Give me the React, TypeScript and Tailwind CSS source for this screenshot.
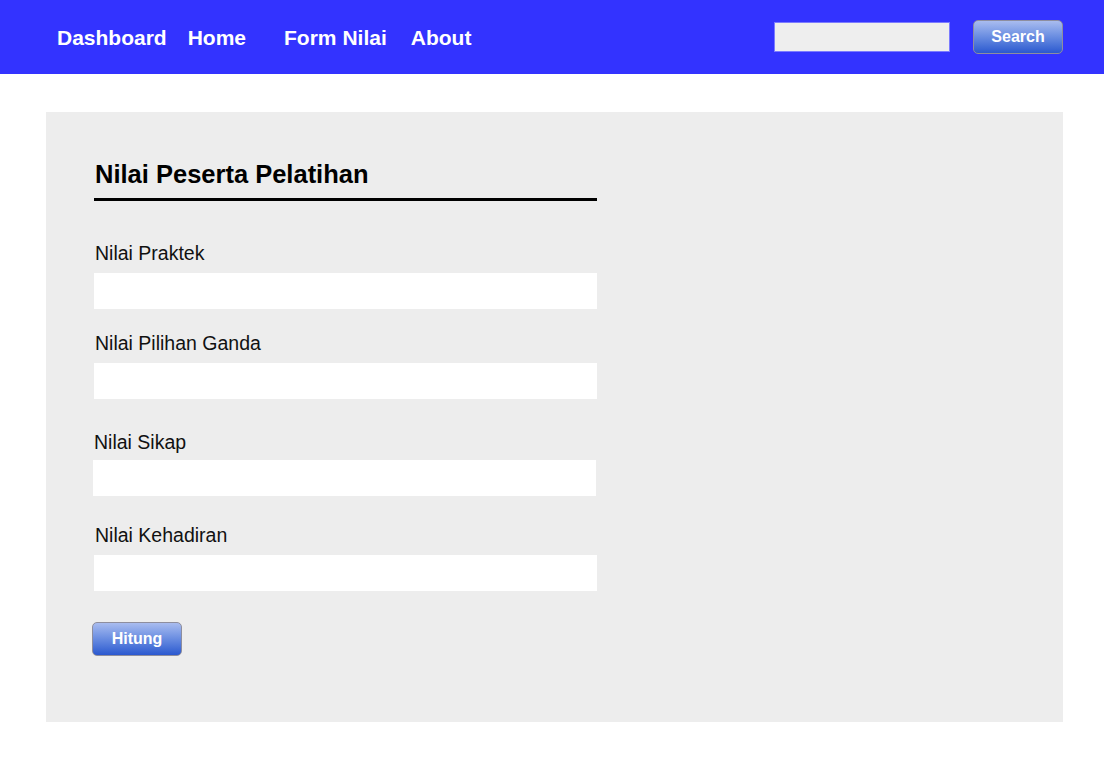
import React from 'react';

const fields = [
  { label: 'Nilai Praktek', wrap: 'mt-[41px] ml-0', gap: 'mt-[9px]' },
  { label: 'Nilai Pilihan Ganda', wrap: 'mt-[23px] ml-0', gap: 'mt-[9px]' },
  { label: 'Nilai Sikap', wrap: 'mt-[32px] -ml-px', gap: 'mt-[7px]' },
  { label: 'Nilai Kehadiran', wrap: 'mt-[28px] ml-0', gap: 'mt-[9px]' },
];

const navLinks = [
  { label: 'Dashboard', cls: 'ml-[57px]' },
  { label: 'Home', cls: 'ml-[21px]' },
  { label: 'Form Nilai', cls: 'ml-[38px]' },
  { label: 'About', cls: 'ml-[24px]' },
];

export default function App() {
  return (
    <div className="min-h-[768px] bg-white font-['Liberation_Sans',Arial,sans-serif]">
      {/* Top bar */}
      <nav className="flex h-[74px] items-center bg-[#3333ff]">
        <ul className="flex items-center pt-[3px]">
          {navLinks.map((l) => (
            <li key={l.label} className={l.cls}>
              <a className="text-[21px] font-bold leading-6 text-white">{l.label}</a>
            </li>
          ))}
        </ul>
        <div className="ml-auto mr-[41px] flex items-center">
          <input
            type="text"
            className="h-[30px] w-[176px] border border-[#7b7bff] bg-[#eeeeee] outline-none"
          />
          <button className="ml-[23px] h-[34px] w-[90px] rounded-[5px] border border-[#8e8e9e] bg-gradient-to-b from-[#a9bcef] to-[#2b58cf] text-[16px] font-bold text-white">
            Search
          </button>
        </div>
      </nav>

      {/* Form panel */}
      <main className="ml-[46px] mt-[38px] w-[1017px] bg-[#ededed] pb-[66px] pl-[48px] pt-[47px]">
        <div className="w-[503px]">
          <h2 className="border-b-[3px] border-black pb-[9px] pl-px text-[25.5px] font-bold leading-[30px] text-black">
            Nilai Peserta Pelatihan
          </h2>

          {fields.map((f) => (
            <div key={f.label} className={f.wrap}>
              <label className="block pl-px text-[19.5px] leading-[22px] text-[#111]">{f.label}</label>
              <input type="text" className={`${f.gap} block h-[36px] w-[503px] bg-white outline-none`} />
            </div>
          ))}

          <button className="-ml-[2px] mt-[31px] h-[34px] w-[90px] rounded-[5px] border border-[#8e8e9e] bg-gradient-to-b from-[#a9bcef] to-[#2b58cf] text-[16px] font-bold text-white">
            Hitung
          </button>
        </div>
      </main>
    </div>
  );
}
